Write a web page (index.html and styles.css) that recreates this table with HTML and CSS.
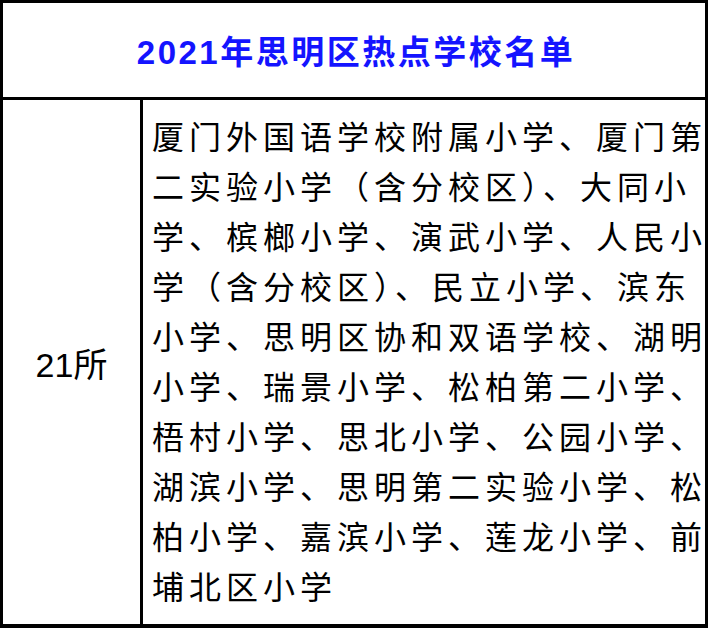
FILE: index.html
```html
<!DOCTYPE html>
<html lang="zh-CN">
<head>
<meta charset="utf-8">
<title>2021年思明区热点学校名单</title>
<link rel="stylesheet" href="styles.css">
</head>
<body>
<div class="sheet">
  <div class="title">2021年思明区热点学校名单</div>
  <div class="row">
    <div class="count">21所</div>
    <div class="list">厦门外国语学校附属小学、厦门第二实验小学（含分校区）、大同小学、槟榔小学、演武小学、人民小学（含分校区）、民立小学、滨东小学、思明区协和双语学校、湖明小学、瑞景小学、松柏第二小学、梧村小学、思北小学、公园小学、湖滨小学、思明第二实验小学、松柏小学、嘉滨小学、莲龙小学、前埔北区小学</div>
  </div>
</div>
</body>
</html>
```
FILE: styles.css
```css
html, body {
  margin: 0;
  padding: 0;
  background: #fff;
}
.sheet {
  width: 708px;
  height: 628px;
  box-sizing: border-box;
  border: 3px solid #000;
  border-bottom-width: 4px;
  display: grid;
  grid-template-rows: 97px 1fr;
  font-family: "Liberation Sans", "Noto Sans CJK SC", sans-serif;
  color: #000;
}
.title {
  border-bottom: 3px solid #000;
  display: flex;
  align-items: center;
  justify-content: center;
  color: #1414ff;
  font-weight: bold;
  font-size: 33px;
  letter-spacing: 2.5px;
  padding-left: 4px;
}
.row {
  display: grid;
  grid-template-columns: 140px 1fr;
  min-width: 0;
}
.count {
  border-right: 3px solid #000;
  display: flex;
  align-items: center;
  justify-content: center;
  font-size: 34px;
}
.list {
  padding: 13px 0 0 9px;
  margin-right: -8px;
  font-size: 32px;
  letter-spacing: 5px;
  line-height: 50px;
}
```
